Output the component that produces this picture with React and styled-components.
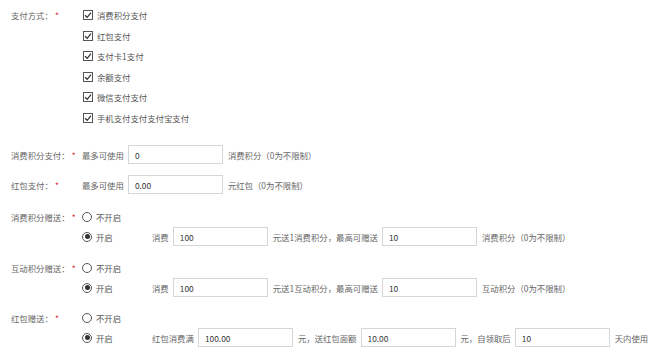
import styled, { createGlobalStyle } from "styled-components";

const GlobalStyle = createGlobalStyle`
    body {
        margin: 0;
        background: #fff;
        font-family: "Noto Sans CJK SC", "Microsoft YaHei", sans-serif;
        font-size: 8.4px;
        color: #666;
    }
`;

const Form = styled.div`
    padding-top: 4.7px;
`;

const Field = styled.div`
    display: flex;
    margin-top: ${(p) => p.$top || 0}px;
`;

const Label = styled.div`
    width: 82px;
    flex-shrink: 0;
    box-sizing: border-box;
    padding-left: 11px;
    height: ${(p) => p.$h}px;
    line-height: ${(p) => p.$h}px;
    white-space: nowrap;
`;

const Star = styled.span`
    color: #e0303a;
    margin-left: 2px;
`;

const Content = styled.div`
    display: flex;
    flex-direction: column;
`;

const Row = styled.div`
    display: flex;
    align-items: center;
    gap: 4px;
    height: ${(p) => p.$h}px;
    white-space: nowrap;
`;

const CheckBox = styled.span`
    width: 10px;
    height: 10px;
    box-sizing: border-box;
    border: 1px solid #555;
    display: flex;
    align-items: center;
    justify-content: center;
    margin-left: 1px;
`;

const CheckText = styled.span`
    color: #555;
`;

const RadioOption = styled.div`
    display: flex;
    align-items: center;
    gap: 4px;
    width: ${(p) => (p.$wide ? "66px" : "auto")};
    color: #555;
`;

const RadioCircle = styled.span`
    width: 10px;
    height: 10px;
    box-sizing: border-box;
    border: 1px solid #555;
    border-radius: 50%;
    display: flex;
    align-items: center;
    justify-content: center;

    &::after {
        content: "";
        display: ${(p) => (p.$checked ? "block" : "none")};
        width: 5px;
        height: 5px;
        border-radius: 50%;
        background: #333;
    }
`;

const Input = styled.input`
    width: ${(p) => p.$w || 95}px;
    height: 19px;
    box-sizing: border-box;
    border: 1px solid #d6d6d6;
    padding: 0 6px;
    margin: 0;
    font-family: inherit;
    font-size: 8.4px;
    color: #333;
    outline: none;
`;

const Note = styled.span`
    margin-left: 1px;
`;

const payments = ["消费积分支付", "红包支付", "支付卡1支付", "余额支付", "微信支付支付", "手机支付支付支付宝支付"];

function Check({ children }) {
    return (
        <Row $h={20.6}>
            <CheckBox>
                <svg width="8" height="8" viewBox="0 0 8 8">
                    <path d="M1 4.2 L3.2 6.3 L7 1.6" fill="none" stroke="#333" strokeWidth="1.2" />
                </svg>
            </CheckBox>
            <CheckText>{children}</CheckText>
        </Row>
    );
}

function Radio({ checked, wide, children }) {
    return (
        <RadioOption $wide={wide}>
            <RadioCircle $checked={checked} />
            {children}
        </RadioOption>
    );
}

function GiftField({ label, top, children }) {
    return (
        <Field $top={top}>
            <Label $h={20}>
                {label}：<Star>*</Star>
            </Label>
            <Content>
                <Row $h={20}>
                    <Radio>不开启</Radio>
                </Row>
                <Row $h={20}>
                    <Radio checked wide>开启</Radio>
                    {children}
                </Row>
            </Content>
        </Field>
    );
}

export default function App() {
    return (
        <>
            <GlobalStyle />
            <Form>
                <Field>
                    <Label $h={20.6}>
                        支付方式：<Star>*</Star>
                    </Label>
                    <Content>
                        {payments.map((p) => (
                            <Check key={p}>{p}</Check>
                        ))}
                    </Content>
                </Field>

                <Field $top={16.7}>
                    <Label $h={20}>
                        消费积分支付：<Star>*</Star>
                    </Label>
                    <Row $h={20}>
                        最多可使用
                        <Input defaultValue="0" />
                        <Note>消费积分（0为不限制）</Note>
                    </Row>
                </Field>

                <Field $top={10}>
                    <Label $h={20}>
                        红包支付：<Star>*</Star>
                    </Label>
                    <Row $h={20}>
                        最多可使用
                        <Input defaultValue="0.00" />
                        <Note>元红包（0为不限制）</Note>
                    </Row>
                </Field>

                <GiftField label="消费积分赠送" top={12}>
                    消费
                    <Input defaultValue="100" />
                    <Note>元送1消费积分，最高可赠送</Note>
                    <Input defaultValue="10" />
                    <Note>消费积分（0为不限制）</Note>
                </GiftField>

                <GiftField label="互动积分赠送" top={11}>
                    消费
                    <Input defaultValue="100" />
                    <Note>元送1互动积分，最高可赠送</Note>
                    <Input defaultValue="10" />
                    <Note>互动积分（0为不限制）</Note>
                </GiftField>

                <GiftField label="红包赠送" top={10}>
                    红包消费满
                    <Input defaultValue="100.00" />
                    <Note>元，送红包面额</Note>
                    <Input defaultValue="10.00" />
                    <Note>元，自领取后</Note>
                    <Input defaultValue="10" />
                    <Note>天内使用</Note>
                </GiftField>
            </Form>
        </>
    );
}
